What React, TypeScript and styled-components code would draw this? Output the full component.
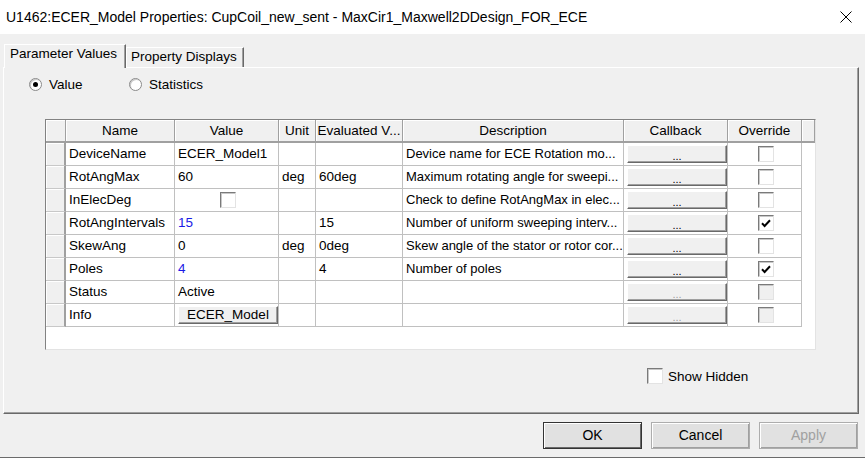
import React from 'react';
import styled, { createGlobalStyle } from 'styled-components';

const GlobalStyle = createGlobalStyle`
  html, body {
    margin: 0;
    padding: 0;
    background: #f0f0f0;
  }
  body {
    font-family: "Liberation Sans", Arial, sans-serif;
    font-size: 13.5px;
    color: #000;
  }
  * { box-sizing: border-box; }
`;

const COLS = '20px 109px 104px 37px 87px 221px 104px 74px 13px';

const Window = styled.div`
  width: 865px;
  height: 458px;
  display: flex;
  flex-direction: column;
  background: #f0f0f0;
  border-bottom: 1px solid #6b6b6b;
  overflow: hidden;
`;

const TitleBar = styled.div`
  height: 34px;
  flex: none;
  background: #fff;
  display: flex;
  align-items: center;
  justify-content: space-between;
  padding: 0 13px 0 6px;
`;

const TitleText = styled.span`
  font-size: 14px;
  color: #000;
  white-space: nowrap;
`;

const CloseIcon = styled.svg`
  width: 12px;
  height: 12px;
  display: block;
`;

const Client = styled.div`
  flex: 1;
  display: flex;
  flex-direction: column;
  padding: 9px 6px 0 3px;
`;

const TabStrip = styled.div`
  display: flex;
  align-items: flex-end;
  padding-left: 1px;
  height: 24px;
`;

const Tab = styled.div<{ $active?: boolean }>`
  height: ${p => (p.$active ? '24px' : '20px')};
  margin-bottom: ${p => (p.$active ? '-1px' : '0')};
  padding: ${p => (p.$active ? '0 8px 0 5px' : '0 6px 0 4px')};
  background: #f0f0f0;
  border-top: 1px solid #fff;
  border-left: 1px solid #fff;
  border-right: 1px solid #696969;
  box-shadow: inset -1px 0 #a0a0a0;
  white-space: nowrap;
  position: relative;
  z-index: ${p => (p.$active ? 1 : 0)};
  line-height: 18px;
`;

const TabPanel = styled.div`
  height: 347px;
  border-top: 1px solid #fff;
  border-left: 1px solid #fff;
  border-right: 1px solid #696969;
  border-bottom: 1px solid #696969;
  box-shadow: inset -1px -1px #a0a0a0;
  display: flex;
  flex-direction: column;
  padding-left: 25px;
`;

const RadioRow = styled.div`
  display: flex;
  align-items: center;
  height: 18px;
  margin-top: 7px;
`;

const RadioLabel = styled.label`
  display: flex;
  align-items: center;
  gap: 7px;
  width: 100px;
`;

const RadioDot = styled.span<{ $checked?: boolean }>`
  width: 13px;
  height: 13px;
  border-radius: 50%;
  border: 1px solid #8a8a8a;
  background: #fff;
  box-shadow: inset 1px 1px #c8c8c8;
  display: flex;
  align-items: center;
  justify-content: center;
  &::after {
    content: '';
    width: 5px;
    height: 5px;
    border-radius: 50%;
    background: ${p => (p.$checked ? '#000' : 'transparent')};
  }
`;

const Grid = styled.div`
  margin-top: 26px;
  margin-left: 16px;
  width: 771px;
  height: 231px;
  background: #fff;
  border-top: 1px solid #828282;
  border-left: 1px solid #828282;
  border-right: 1px solid #e3e3e3;
  border-bottom: 1px solid #e3e3e3;
`;

const Row = styled.div`
  display: grid;
  grid-template-columns: ${COLS};
  height: 23px;
`;

const HeadCell = styled.div`
  background: #f0f0f0;
  border-right: 1px solid #a0a0a0;
  border-bottom: 2px solid #a0a0a0;
  box-shadow: inset 1px 1px #fff;
  text-align: center;
  line-height: 21px;
  white-space: nowrap;
  overflow: hidden;
`;

const RowHead = styled.div`
  background: #f0f0f0;
  border-right: 2px solid #a0a0a0;
  border-bottom: 1px solid #c8c8c8;
  box-shadow: inset 1px 1px #fff;
`;

const Cell = styled.div<{ $blue?: boolean; $center?: boolean; $small?: boolean }>`
  border-right: 1px solid #c0c0c0;
  border-bottom: 1px solid #c0c0c0;
  padding-left: 3px;
  line-height: 22px;
  white-space: nowrap;
  overflow: hidden;
  font-size: ${p => (p.$small ? '13px' : 'inherit')};
  color: ${p => (p.$blue ? '#1a1ae6' : '#000')};
  display: flex;
  align-items: center;
  justify-content: ${p => (p.$center ? 'center' : 'flex-start')};
`;

const RaisedButton = styled.div<{ $disabled?: boolean; $width?: number }>`
  width: ${p => p.$width ?? 100}px;
  height: 18px;
  background: #f0f0f0;
  border: 1px solid;
  border-color: #fff #696969 #696969 #fff;
  box-shadow: inset -1px -1px #a0a0a0;
  display: flex;
  align-items: center;
  justify-content: center;
  color: ${p => (p.$disabled ? '#a0a0a0' : '#000')};
  line-height: 16px;
`;

const Dots = styled.span`
  font-size: 11px;
  padding-top: 3px;
`;

const Check = styled.span<{ $disabled?: boolean; $size?: number }>`
  width: ${p => p.$size ?? 16}px;
  height: ${p => p.$size ?? 16}px;
  flex: none;
  border: 1px solid;
  border-color: #7a7a7a #e3e3e3 #e3e3e3 #7a7a7a;
  box-shadow: inset 1px 1px #c8c8c8;
  background: ${p => (p.$disabled ? '#f0f0f0' : '#fff')};
  display: flex;
  align-items: center;
  justify-content: center;
`;

const HiddenRow = styled.div`
  margin-top: 18px;
  margin-left: 618px;
  display: flex;
  align-items: center;
  gap: 5px;
  height: 16px;
`;

const ButtonBar = styled.div`
  display: flex;
  justify-content: flex-end;
  gap: 9px;
  margin-top: 8px;
  padding-right: 1px;
`;

const DialogButton = styled.button<{ $default?: boolean }>`
  width: 99px;
  height: 27px;
  font: inherit;
  font-size: 14px;
  line-height: 22px;
  padding: 0 0 2px;
  background: #e1e1e1;
  color: ${p => (p.disabled ? '#a0a0a0' : '#000')};
  border: 1px solid ${p => (p.$default ? '#333' : '#adadad')};
  box-shadow: ${p =>
    p.$default
      ? 'inset 1px 1px #fff, inset -1px -1px #696969'
      : 'inset 1px 1px #fff, inset -1px -1px #a0a0a0'};
`;

type Param = {
  name: string;
  value?: string;
  blue?: boolean;
  valueCheck?: boolean;
  valueButton?: string;
  unit?: string;
  evaluated?: string;
  description?: string;
  override: 'off' | 'on' | 'disabled';
  callbackDisabled?: boolean;
};

const params: Param[] = [
  { name: 'DeviceName', value: 'ECER_Model1', description: 'Device name for ECE Rotation mo...', override: 'off' },
  { name: 'RotAngMax', value: '60', unit: 'deg', evaluated: '60deg', description: 'Maximum rotating angle for sweepi...', override: 'off' },
  { name: 'InElecDeg', valueCheck: true, description: 'Check to define RotAngMax in elec...', override: 'off' },
  { name: 'RotAngIntervals', value: '15', blue: true, evaluated: '15', description: 'Number of uniform sweeping interv...', override: 'on' },
  { name: 'SkewAng', value: '0', unit: 'deg', evaluated: '0deg', description: 'Skew angle of the stator or rotor cor...', override: 'off' },
  { name: 'Poles', value: '4', blue: true, evaluated: '4', description: 'Number of poles', override: 'on' },
  { name: 'Status', value: 'Active', override: 'disabled', callbackDisabled: true },
  { name: 'Info', valueButton: 'ECER_Model', override: 'disabled', callbackDisabled: true },
];

const headers = ['Name', 'Value', 'Unit', 'Evaluated V...', 'Description', 'Callback', 'Override'];

function CheckMark() {
  return (
    <svg width="10" height="9" viewBox="0 0 10 9">
      <path d="M1 4.3 L3.6 7 L9 1.3" fill="none" stroke="#000" strokeWidth="2" />
    </svg>
  );
}

function App() {
  return (
    <>
      <GlobalStyle />
      <Window>
        <TitleBar>
          <TitleText>U1462:ECER_Model Properties: CupCoil_new_sent - MaxCir1_Maxwell2DDesign_FOR_ECE</TitleText>
          <CloseIcon viewBox="0 0 12 12">
            <path d="M0.5 0.5 L11.5 11.5 M11.5 0.5 L0.5 11.5" stroke="#000" strokeWidth="1" />
          </CloseIcon>
        </TitleBar>
        <Client>
          <TabStrip>
            <Tab $active>Parameter Values</Tab>
            <Tab>Property Displays</Tab>
          </TabStrip>
          <TabPanel>
            <RadioRow>
              <RadioLabel>
                <RadioDot $checked />
                Value
              </RadioLabel>
              <RadioLabel>
                <RadioDot />
                Statistics
              </RadioLabel>
            </RadioRow>
            <Grid>
              <Row>
                <HeadCell />
                {headers.map(h => (
                  <HeadCell key={h}>{h}</HeadCell>
                ))}
                <HeadCell />
              </Row>
              {params.map(p => (
                <Row key={p.name}>
                  <RowHead />
                  <Cell>{p.name}</Cell>
                  <Cell $blue={p.blue} $center={p.valueCheck}>
                    {p.valueCheck && <Check />}
                    {p.valueButton && <RaisedButton $width={100}>{p.valueButton}</RaisedButton>}
                    {p.value}
                  </Cell>
                  <Cell>{p.unit}</Cell>
                  <Cell>{p.evaluated}</Cell>
                  <Cell $small>{p.description}</Cell>
                  <Cell>
                    <RaisedButton $disabled={p.callbackDisabled}>
                      <Dots>...</Dots>
                    </RaisedButton>
                  </Cell>
                  <Cell $center>
                    <Check $disabled={p.override === 'disabled'}>
                      {p.override === 'on' && <CheckMark />}
                    </Check>
                  </Cell>
                </Row>
              ))}
            </Grid>
            <HiddenRow>
              <Check />
              Show Hidden
            </HiddenRow>
          </TabPanel>
          <ButtonBar>
            <DialogButton $default>OK</DialogButton>
            <DialogButton>Cancel</DialogButton>
            <DialogButton disabled>Apply</DialogButton>
          </ButtonBar>
        </Client>
      </Window>
    </>
  );
}

export default App;
